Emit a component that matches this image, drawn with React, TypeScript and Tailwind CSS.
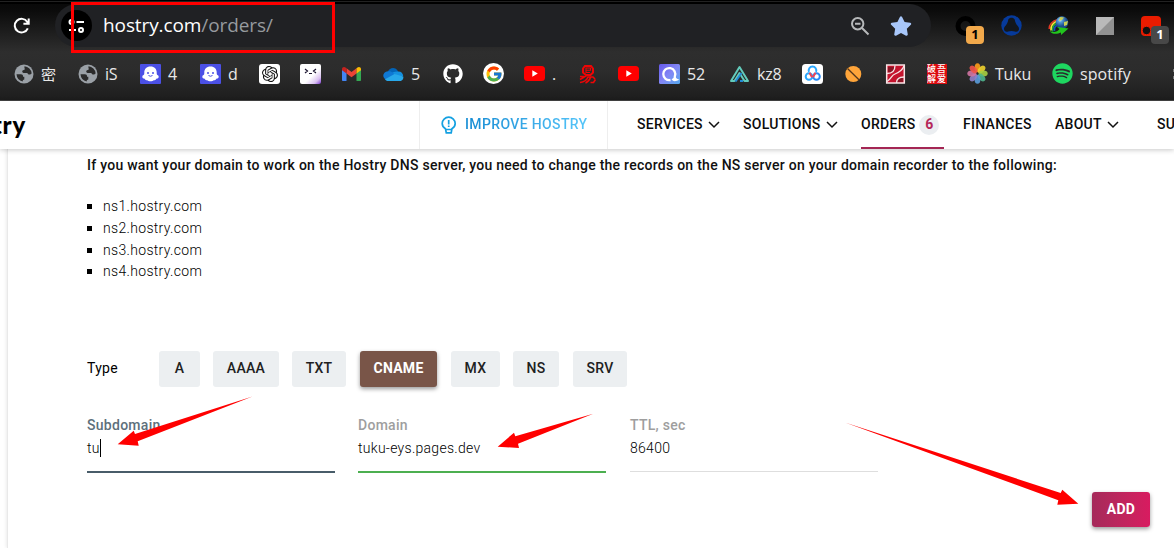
import React from 'react';
import { FaGithub, FaSpotify, FaStar } from 'react-icons/fa';
import { FcGoogle } from 'react-icons/fc';
import { SiOpenai } from 'react-icons/si';

const Globe = () => (
  <svg width="20" height="20" viewBox="0 0 20 20">
    <circle cx="10" cy="10" r="9.5" fill="#9aa0a6" />
    <path d="M2.5 10.2h4.3c2 0 2.4 1.4 2.2 2.6h1.3v2.6c-1 .2-1.600.5-1.600 2A8 8 0 0 1 2.500 10.200zM10.500 2.300A8 8 0 0 1 17.700 9.500c-1 .5-1.600 1.400-3 .9-.8-.3-.7-1.500-1.900-1.500H9.500c-1.300 0-1.600-1.500-.9-2.300.5-.6 1.700-.4 2.100-1 .4-.7-.7-1.900-.2-3.300z" fill="#2b2b2b" />
  </svg>
);

const Ghost = () => (
  <svg width="21" height="20" viewBox="0 0 21 20">
    <rect width="21" height="20" rx="1" fill="#4b50e6" />
    <path d="M10.500 2.500c4 0 6.200 2.600 6.200 6 0 1.500 0 2.500 1.800 3.200.7 1.700-.5 3-2.200 3-.5 1-1.500 1.700-2.700 1.600-1 1.400-5.200 1.400-6.200 0-1.200.1-2.200-.6-2.700-1.600-1.700 0-2.900-1.300-2.200-3 1.800-.7 1.800-1.700 1.800-3.200 0-3.400 2.200-6 6.200-6z" fill="#fff" />
    <circle cx="8" cy="9" r="1" fill="#4b50e6" />
    <circle cx="13" cy="9" r="1" fill="#4b50e6" />
    <path d="M8.500 11.500q2 1.500 4 0" fill="none" stroke="#4b50e6" />
  </svg>
);

const ChatTile = () => (
  <span className="flex h-5 w-[21px] items-center justify-center rounded-[3px] bg-white">
    <SiOpenai size={16} color="#111" />
  </span>
);

const FaceTile = () => (
  <svg width="21" height="20" viewBox="0 0 21 20">
    <defs>
      <linearGradient id="face" x1="0.300" y1="0.300" x2="1" y2="1">
        <stop offset="0.400" stopColor="#fff" />
        <stop offset="0.750" stopColor="#d9c0f0" />
        <stop offset="1" stopColor="#7a36cf" />
      </linearGradient>
    </defs>
    <rect width="21" height="20" rx="2" fill="url(#face)" />
    <path d="M5 5l2.500 2L5 9M16 5l-2.500 2L16 9M9 9.500h3" fill="none" stroke="#1b1430" strokeWidth="1.200" />
  </svg>
);

const Gmail = () => (
  <svg width="21" height="16" viewBox="0 0 21 16">
    <path d="M1 3v11.200c0 .5.400.8.800.8H5.500V6.500z" fill="#4285f4" />
    <path d="M20 3v11.200c0 .5-.4.8-.8.8H15.500V6.500z" fill="#34a853" />
    <path d="M5.500 2.200v5.300l5 3.800 5-3.800V2.200l-5 3.800z" fill="#ea4335" />
    <path d="M1 3v1.200l4.500 3.400V2.200l-1-.8C3 .2 1 1.200 1 3z" fill="#c5221f" />
    <path d="M20 3v1.200l-4.500 3.400V2.200l1-.8C18 .2 20 1.200 20 3z" fill="#fbbc04" />
  </svg>
);

const Cloud = () => (
  <svg width="21" height="14" viewBox="0 0 21 14">
    <path d="M5 4.500C6.500.5 12.500-.8 15.200 4.600L9 9z" fill="#0364b8" />
    <path d="M5 4.200c2-.2 3 .2 4.500 1.100L13 7.500 2.500 12.500C-1.200 10-.2 4.700 5 4.200z" fill="#0f78d4" />
    <path d="M15 4.500c3.200-.2 5 2 5.200 4.200L16 11 9.500 5.500C11.500 4.800 13 4.400 15 4.500z" fill="#1490df" />
    <path d="M2 12.200L11.500 7l8.800 2.500c.4 2-.8 4.500-3.300 4.500H5c-1.300 0-2.300-.6-3-1.800z" fill="#28a8ea" />
  </svg>
);

const Google = () => (
  <span className="flex size-[21px] items-center justify-center rounded-full bg-white">
    <FcGoogle size={18} />
  </span>
);

const YouTube = () => (
  <svg width="21" height="15" viewBox="0 0 21 15">
    <rect width="21" height="15" rx="3.500" fill="#f00" />
    <path d="M8.300 4.200v6.600l5.500-3.300z" fill="#fff" />
  </svg>
);

const Squiggle = () => (
  <svg width="21" height="20" viewBox="0 0 21 20" fill="none" stroke="#f00505">
    <path d="M8 2h6l2 2.500v4L13.500 11H9L6 8.500V4.500z" strokeWidth="2" />
    <path d="M9 6.300h4.500V4H9v4.500h4" strokeWidth="1.100" />
    <path d="M3 12.500h5l-5 3M3 18.500c4-.5 7-3 8-5.500h5l2 2M8.500 19c2.500-1 4-3 5-5.500M13.500 18.500h3l2-3" strokeWidth="1.600" />
  </svg>
);

const RingTile = () => (
  <svg width="21" height="20" viewBox="0 0 21 20">
    <defs>
      <linearGradient id="ring" x1="0" y1="0" x2="1" y2="1">
        <stop stopColor="#6558eb" />
        <stop offset="0.500" stopColor="#8387f5" />
        <stop offset="1" stopColor="#55a9ee" />
      </linearGradient>
    </defs>
    <rect width="21" height="20" rx="1.500" fill="url(#ring)" />
    <path d="M11.500 16A6 6 0 1 1 15.800 12.500c-.4 1.300.3 2.500 1.700 3.200-1.600.6-3.200.2-4-1" fill="none" stroke="#fff" strokeWidth="2.300" />
  </svg>
);

const Peaks = () => (
  <svg width="21" height="18" viewBox="0 0 21 18" fill="none" strokeWidth="2">
    <path d="M10.500 2L2 16h3.500l5-8 5 8H19z" stroke="#63cbbb" strokeLinejoin="round" />
    <path d="M6.500 16.500L12.500 8M11 16h3" stroke="#218bd5" />
  </svg>
);

const Baidu = () => (
  <svg width="21" height="20" viewBox="0 0 21 20">
    <rect width="21" height="20" rx="3.500" fill="#fff" />
    <g fill="none" strokeWidth="2">
      <circle cx="7" cy="12.500" r="3.300" stroke="#2aa8ff" />
      <circle cx="14.500" cy="12.500" r="3.300" stroke="#2588f5" />
      <path d="M7 7.800a3.800 3.800 0 1 1 7 0" stroke="#2aa8ff" />
      <path d="M7.500 8.800l2.500 4.500M13.500 8.800L11 13.300" stroke="#f04556" />
    </g>
  </svg>
);

const OrangeBall = () => (
  <svg width="21" height="18" viewBox="0 0 21 18">
    <circle cx="10.300" cy="9" r="8" fill="#ffa53a" />
    <path d="M4.500 3.500L16.200 15" stroke="#54361c" strokeWidth="1.300" />
  </svg>
);

const RedWeave = () => (
  <svg width="21" height="20" viewBox="0 0 21 20">
    <rect x="1.700" y="1" width="17.600" height="18" fill="#c5142e" stroke="#f6e5e6" strokeWidth="1.500" />
    <path d="M3 3h6v5H3zM12 13.500h6V18h-6z" fill="#8a1424" />
    <path d="M2 9.500c5 0 8-3 8-8M2 17.500c5-3 4-6 8-7.500s7-3 9-8M11.500 19c0-4 3-6 7.500-6" fill="none" stroke="#f6e5e6" strokeWidth="1.300" />
  </svg>
);

const Stamp = () => (
  <span className="grid h-5 w-5 grid-cols-2 grid-rows-2 place-items-center overflow-hidden bg-[#dc0c10] font-['Noto_Sans_CJK_SC',sans-serif] text-[9px] leading-[10px] font-medium tracking-normal text-white">
    <span>破</span><span>吾</span><span>解</span><span>爱</span>
  </span>
);

const petals = ['#ff9c19', '#efd12e', '#a6cf42', '#4fb58d', '#5a9cdc', '#9180c9', '#d274a3', '#f2544b'];
const Flower = () => (
  <svg width="21" height="21" viewBox="0 0 21 21">
    {petals.map((c, i) => (
      <ellipse key={c} cx="10.500" cy="4.800" rx="2.900" ry="4.500" fill={c} opacity="0.900" transform={`rotate(${i * 45} 10.500 10.500)`} />
    ))}
  </svg>
);

const Spotify = () => <FaSpotify size={21} color="#1ed760" />;
const GitHub = () => <FaGithub size={20} color="#fff" />;
const Divider = () => <span className="h-2.5 w-[3px] border-y-3 border-[#777]" />;

const bookmarks: { icon: React.FC; w: string; label?: string; text?: string }[] = [
  { icon: Globe, w: 'w-[64px]', label: '密', text: 'text-[15px]' },
  { icon: Globe, w: 'w-[63px]', label: 'iS' },
  { icon: Ghost, w: 'w-[60px]', label: '4' },
  { icon: Ghost, w: 'w-[59px]', label: 'd' },
  { icon: ChatTile, w: 'w-[41px]' },
  { icon: FaceTile, w: 'w-[41px]' },
  { icon: Gmail, w: 'w-[42px]' },
  { icon: Cloud, w: 'w-[59px]', label: '5' },
  { icon: GitHub, w: 'w-[41px]' },
  { icon: Google, w: 'w-[41px]' },
  { icon: YouTube, w: 'w-[53px]', label: '.' },
  { icon: Squiggle, w: 'w-[41px]' },
  { icon: YouTube, w: 'w-[41px]' },
  { icon: RingTile, w: 'w-[70px]', label: '52' },
  { icon: Peaks, w: 'w-[73px]', label: 'kz8' },
  { icon: Baidu, w: 'w-[41px]' },
  { icon: OrangeBall, w: 'w-[42px]' },
  { icon: RedWeave, w: 'w-[41px]' },
  { icon: Stamp, w: 'w-[41px]' },
  { icon: Flower, w: 'w-[85px]', label: 'Tuku' },
  { icon: Spotify, w: 'w-[112px]', label: 'spotify', text: 'tracking-[0.1px]' },
  { icon: Divider, w: 'w-[20px]' },
];

const Browser = () => (
  <header className="flex h-[101px] flex-col border-b border-[#444] bg-[linear-gradient(180deg,#080808_0%,#0b0b0b_10%,#2e2e2e_52%,#2c2c2c_72%,#1d1d1d_100%)]">
    <div className="h-1 shrink-0 border-t border-b-2 border-t-black border-b-black bg-[#222]" />
    <div className="flex h-[43px] shrink-0 items-center">
      <div className="flex w-[55px] justify-center pr-[11px]">
        <svg width="18" height="18" viewBox="0 0 18 18" fill="none" stroke="#fff" strokeWidth="2">
          <path d="M14.800 11.300A6.800 6.800 0 1 1 14.300 5l1 1.500M15.700 1.500v5.300h-5.300" />
        </svg>
      </div>
      <div className="flex h-[43px] w-[876px] items-center rounded-full bg-[#202124] pl-1.5">
        <div className="flex size-[31px] shrink-0 items-center justify-center rounded-full bg-black">
          <svg width="17" height="16" viewBox="0 0 17 16" fill="none" stroke="#fff" strokeWidth="2">
            <circle cx="3.500" cy="4" r="2" /><path d="M8.500 4H16M1 12h7" /><circle cx="13" cy="12" r="2" />
          </svg>
        </div>
        <div className="ml-[11px] w-[747px] pb-0.5 text-[19px] leading-6 tracking-[-0.1px] text-white">
          hostry.com<span className="text-[#969a9e]">/orders/</span>
        </div>
        <svg className="shrink-0" width="20" height="20" viewBox="0 0 20 20" fill="none" stroke="#b6b8ba" strokeWidth="2">
          <circle cx="7.700" cy="7.700" r="5.700" /><path d="M5 7.700h5.500M12 12l6.500 6.500" />
        </svg>
        <FaStar className="ml-5 shrink-0" size={22} color="#a8c7fa" />
      </div>
      <div className="relative ml-6 h-5 w-[46px] shrink-0">
        <svg width="21" height="20" viewBox="0 0 21 20"><circle cx="10.500" cy="10" r="7.500" fill="none" stroke="#000" strokeWidth="5" /></svg>
        <span className="absolute top-[10px] left-[11px] flex h-[18px] w-[18px] items-center justify-center rounded bg-[#f2a94b] text-[13px] font-bold text-black">1</span>
      </div>
      <svg className="mr-[26px] shrink-0" width="21" height="21" viewBox="0 0 21 21">
        <circle cx="10.500" cy="10.500" r="10.200" fill="#063a9b" />
        <path d="M7.300 4.600c1.200-2.500 5.200-2.500 6.400 0 .4 2.700 1.400 4.700 3.600 7.200 1.900 2.900-.3 5.700-3.400 4.700-2.200-.7-4.600-.7-6.800 0-3.100 1-5.300-1.800-3.400-4.700 2.200-2.500 3.200-4.500 3.600-7.200z" fill="#13171d" />
      </svg>
      <svg className="mr-[27px] shrink-0" width="21" height="20" viewBox="0 0 21 20">
        <defs>
          <radialGradient id="earth" cx="0.350" cy="0.300">
            <stop stopColor="#dcefff" /><stop offset="0.350" stopColor="#559bd6" /><stop offset="1" stopColor="#1c4c8b" />
          </radialGradient>
        </defs>
        <g fill="none" strokeWidth="1.700">
          <path d="M10 3.500C4 5 1 9 1.300 13" stroke="#e03621" />
          <path d="M10 5C5 6.500 2.500 9 3 14.500" stroke="#ffe536" />
          <path d="M10 7c-4 1-6 4-5.300 8.500" stroke="#19a642" />
          <path d="M10 9c-3 1-4 3-3.500 6" stroke="#154fc4" />
        </g>
        <circle cx="14" cy="6.500" r="6.300" fill="url(#earth)" />
        <path d="M12 1l4 .5-2 2.500-3 1zM16 6l4-1-1 4-3 1z" fill="#c9cf55" />
        <path d="M1.500 15c4 2 8 1 10-2l-2.500-2 11.500 1.500-7.500 6.500v-2.500c-4 2-9 2-11.500-1.500z" fill="#22c51e" />
      </svg>
      <svg className="mr-[27px] shrink-0" width="18" height="18" viewBox="0 0 18 18">
        <path d="M0 0h18v18H0z" fill="#919191" /><path d="M0 0h18L0 18z" fill="#b9b9b9" />
      </svg>
      <div className="relative h-5 w-[33px] shrink-0">
        <svg width="20" height="20" viewBox="0 0 20 20">
          <path d="M4 0h12q4 0 4 4v16H4q-4 0-4-4V4q0-4 4-4z" fill="#ea1c00" /><circle cx="5.500" cy="14.500" r="4.200" fill="#111" stroke="#ea1c00" strokeWidth="1" /><circle cx="15" cy="14.500" r="4" fill="#111" />
        </svg>
        <span className="absolute top-[10px] left-[10px] flex h-[18px] w-[18px] items-center justify-center rounded bg-[#484848] text-[13px] font-bold text-white">1</span>
      </div>
    </div>
    <div className="flex h-[53px] w-full items-center overflow-hidden pl-[13px] text-[16px] tracking-[-0.2px] text-[#e8e8e8]">
      {bookmarks.map(({ icon: Icon, w, label, text = '' }, i) => (
        <div key={i} className={`flex h-6 shrink-0 items-center ${w}`}>
          <span className="flex w-[21px] shrink-0 items-center justify-center"><Icon /></span>
          {label && <span className={`ml-[7px] leading-6 whitespace-nowrap ${text}`}>{label}</span>}
        </div>
      ))}
    </div>
  </header>
);

const Chevron = () => (
  <svg className="ml-[5px] shrink-0" width="12" height="8" viewBox="0 0 12 8" fill="none" stroke="#111" strokeWidth="1.500"><path d="M1 1l5 5 5-5" /></svg>
);

const Nav = () => (
  <nav className="relative flex h-12 shrink-0 items-center bg-white pb-px text-[14px] font-medium whitespace-nowrap text-[#0c0c0c] shadow-[0_1px_5px_rgba(0,0,0,0.22)]">
    <div className="flex w-[26px] shrink-0 justify-end overflow-hidden pt-px font-['Lato',sans-serif] text-[24px] leading-9 font-black tracking-[0.8px] text-black">try</div>
    <div className="ml-[393px] flex h-12 w-[189px] shrink-0 items-center border-x border-[#eee] pl-[21px]">
      <svg width="16" height="18" viewBox="0 0 16 18" fill="none" stroke="#14a0e1" strokeWidth="1.700">
        <path d="M4.500 12.800C2.500 11.600 1.200 9.700 1.200 7.500a6.500 6.300 0 1 1 13 0c0 2.200-1.300 4.100-3.300 5.300l-.7 4.100H5.300zM4.700 13.500h6M7.700 4v4.500M7.700 9.500V11" />
      </svg>
      <span className="ml-[8px] bg-gradient-to-r from-[#138bd3] to-[#55c6fa] bg-clip-text tracking-[0.36px] text-transparent">IMPROVE HOSTRY</span>
    </div>
    <div className="ml-[29px] flex w-[106px] shrink-0 items-center tracking-[0.28px]">SERVICES<Chevron /></div>
    <div className="flex w-[118px] shrink-0 items-center tracking-[0.28px]">SOLUTIONS<Chevron /></div>
    <div className="mt-px flex h-12 w-[83px] shrink-0 items-center border-b-2 border-[#a42654] pt-px tracking-[0.28px]">ORDERS<span className="ml-[4px] flex size-5 items-center justify-center rounded-full bg-[#ebeef1] font-bold text-[#b52859]">6</span></div>
    <div className="ml-[19px] w-[92px] shrink-0 tracking-[0.28px]">FINANCES</div>
    <div className="flex w-[102px] shrink-0 items-center tracking-[0.28px]">ABOUT<Chevron /></div>
    <div className="w-[17px] overflow-hidden tracking-[0.28px]">SUPPORT</div>
  </nav>
);

const types = [
  { name: 'A', w: 'w-[41px]' },
  { name: 'AAAA', w: 'w-[66px]' },
  { name: 'TXT', w: 'w-[54px]' },
  { name: 'CNAME', w: 'ml-px w-[77px]' },
  { name: 'MX', w: 'ml-px w-[49px]' },
  { name: 'NS', w: 'w-[46px]' },
  { name: 'SRV', w: 'ml-px w-[54px]' },
];

const fields = [
  { label: 'Subdomain', value: 'tu', labelStyle: 'text-[#5d6f7b]', line: 'border-b-2 border-[#485c69]', caret: true },
  { label: 'Domain', value: 'tuku-eys.pages.dev', labelStyle: 'text-[#9e9e9e]', line: 'border-b-2 border-[#4caf50]' },
  { label: 'TTL, sec', value: '86400', labelStyle: 'text-[#9e9e9e]', line: 'ml-px h-[61px]! border-b border-[#dedede]' },
];

export default function App() {
  return (
    <div className="relative flex h-[548px] w-[1174px] flex-col overflow-hidden bg-white font-['Open_Sans','Noto_Sans_CJK_SC',sans-serif]">
      <Browser />
      <div className="flex flex-1 flex-col font-['Roboto',sans-serif]">
        <Nav />
        <main className="ml-[7px] flex flex-1 flex-col border-l border-[#e9e9e9] pl-[79px] text-[14px] text-[#212121] shadow-[-1px_0_3px_rgba(0,0,0,0.08)]">
          <p className="mt-[6px] leading-5 font-medium tracking-[0.262px] whitespace-nowrap text-[#111]">
            If you want your domain to work on the Hostry DNS server, you need to change the records on the NS server on your domain recorder to the following:
          </p>
          <ul className="mt-[21px]">
            {['ns1', 'ns2', 'ns3', 'ns4'].map((n) => (
              <li key={n} className="flex h-[21.700px] items-center font-light tracking-[0.32px] text-black">
                <span className="mr-[11px] size-[5px] bg-black" />{n}.hostry.com
              </li>
            ))}
          </ul>
          <div className="mt-[68px] flex h-9 items-center tracking-[0.28px]">
            <span className="w-[72px] font-normal text-black">Type</span>
            <div className="flex gap-[13px]">
              {types.map(({ name, w }) => (
                <button key={name} className={`h-9 rounded-[3px] text-center tracking-[0.28px] ${w} ${name === 'CNAME' ? 'bg-[#795548] font-bold text-white shadow-[0_2px_4px_rgba(0,0,0,0.4)]' : 'bg-[#eceff1] font-medium text-[#212121]'}`}>{name}</button>
              ))}
            </div>
          </div>
          <div className="mt-[24px] flex h-[62px] gap-[23px]">
            {fields.map(({ label, value, labelStyle, line, caret }) => (
              <label key={label} className={`flex h-[62px] w-[248px] flex-col pt-1 tracking-[0.28px] ${line}`}>
                <span className={`h-[23px] leading-5 font-medium ${labelStyle}`}>{label}</span>
                <span className="flex items-center leading-5 font-light text-black">{value}{caret && <span className="h-[18px] w-px bg-black" />}</span>
              </label>
            ))}
          </div>
          <button className="mt-[19px] mr-6 h-[35px] w-[58px] self-end rounded-[3px] bg-gradient-to-r from-[#a52a5a] to-[#d81b60] text-[14px] font-bold tracking-[0.3px] text-white shadow-[0_2px_4px_rgba(0,0,0,0.4)]">ADD</button>
        </main>
      </div>
      <div className="pointer-events-none absolute top-[2px] left-[71px] h-[51px] w-[264px] border-3 border-[#f00]" />
      <svg className="pointer-events-none absolute inset-0" width="1174" height="548" fill="#f00">
        <path d="M252.500 396.500L135 434l-1.300-3.300L117.700 444.300l21 1.400-1-4.400z" />
        <path d="M593.300 413.700L515.300 436.300l-1.300-3.600L497.700 446.700l21.300 1.300-1-4.300z" />
        <path d="M845 422.500L1060.700 493l1.600-3.300L1078.300 503.700l-21 1 1-4.400z" />
      </svg>
    </div>
  );
}
